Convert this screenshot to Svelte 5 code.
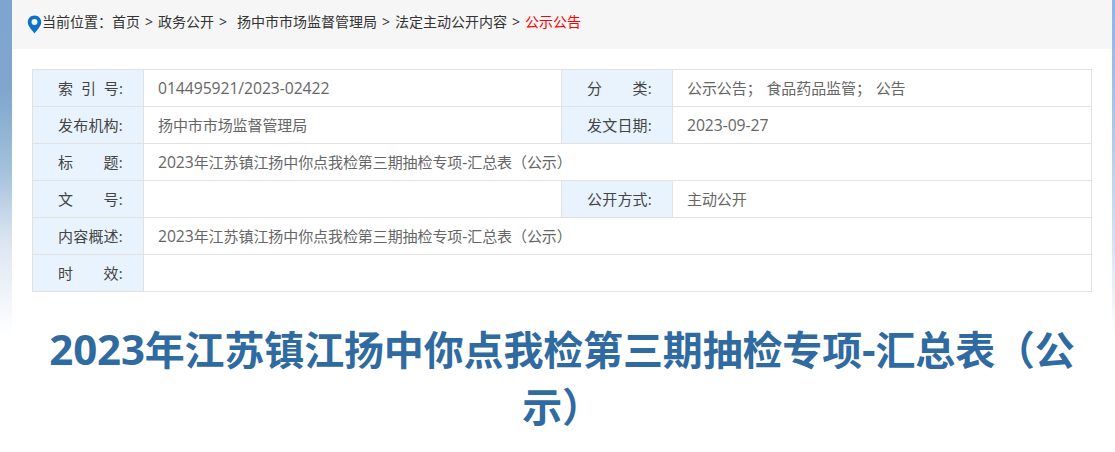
<script>
  const tail = '年江苏镇江扬中你点我检第三期抽检专项';
  const end = '汇总表（公示）';
</script>

{#snippet docTitle()}<span class="n">2023</span>{tail}<span class="n">-</span>{end}{/snippet}

<div class="page">
  <div class="wrap">
    <nav class="crumbs">
      <svg class="pin" width="15" height="19" viewBox="0 0 15 19" aria-hidden="true">
        <path fill-rule="evenodd" fill="#0a70c8" d="M7.5 0.5C3.6 0.5 0.8 3.4 0.8 7.1c0 4.4 4.6 8.6 6.7 11.4 2.1-2.8 6.7-7 6.7-11.4C14.2 3.4 11.4 0.5 7.5 0.5zM7.5 4.1a3 3 0 1 1 0 6 3 3 0 0 1 0-6z"/>
      </svg>
      <span>当前位置：</span><span>首页</span><span class="s">&gt;</span><span>政务公开</span><span class="s s2">&gt;</span><span>扬中市市场监督管理局</span><span class="s">&gt;</span><span>法定主动公开内容</span><span class="s">&gt;</span><span class="cur">公示公告</span>
    </nav>

    <table>
      <colgroup><col class="k" /><col class="v" /><col class="k" /><col /></colgroup>
      <tbody>
        <tr>
          <th>索&ensp;引&ensp;号:</th><td class="num"><span class="n">014495921/2023-02422</span></td>
          <th>分&emsp;&emsp;类:</th><td>公示公告； 食品药品监管； 公告</td>
        </tr>
        <tr>
          <th>发布机构:</th><td>扬中市市场监督管理局</td>
          <th>发文日期:</th><td class="num"><span class="n">2023-09-27</span></td>
        </tr>
        <tr>
          <th>标&emsp;&emsp;题:</th><td colspan="3">{@render docTitle()}</td>
        </tr>
        <tr>
          <th>文&emsp;&emsp;号:</th><td></td>
          <th>公开方式:</th><td>主动公开</td>
        </tr>
        <tr>
          <th>内容概述:</th><td colspan="3">{@render docTitle()}</td>
        </tr>
        <tr>
          <th>时&emsp;&emsp;效:</th><td colspan="3"></td>
        </tr>
      </tbody>
    </table>

    <h1>{@render docTitle()}</h1>
  </div>
</div>

<style>
  :global(body) {
    margin: 0;
    background: #fff;
  }
  .page {
    height: 452px;
    overflow: hidden;
    padding: 0 3px 0 12px;
    background-image:
      linear-gradient(180deg, #7ea5d0 0, #7fa6cd 90px, #a3c1da 170px, #dbe4f0 240px, #fff 335px),
      linear-gradient(180deg, #8db4e2 0, #a8c4e8 110px, #d5e1f2 240px, #fff 335px);
    background-size: 12px 100%, 3px 100%;
    background-position: left top, right top;
    background-repeat: no-repeat;
    font-family: "Open Sans", "Noto Sans CJK SC", sans-serif;
  }
  .wrap {
    background: #fff;
    height: 452px;
  }
  .crumbs {
    height: 49px;
    background: #f6f6f6;
    display: flex;
    align-items: center;
    padding-left: 15px;
    padding-bottom: 7px;
    box-sizing: border-box;
    font-size: 14px;
    color: #333;
    white-space: nowrap;
  }
  .pin {
    margin-top: 7px;
    flex: none;
  }
  .s {
    margin: 0 5px;
  }
  .s2 {
    margin-right: 10px;
  }
  .cur {
    color: #f00;
  }
  .n {
    font-size: 1.05em;
    line-height: 1;
  }
  table {
    width: 1060px;
    margin: 20px 0 0 20px;
    border-collapse: collapse;
    table-layout: fixed;
    font-size: 15px;
  }
  col.k {
    width: 111px;
  }
  col.v {
    width: 418px;
  }
  th,
  td {
    height: 37px;
    padding: 0 0 2px;
    box-sizing: border-box;
    border: 1px solid #e2e2e2;
    white-space: nowrap;
  }
  th {
    background: #e8f3fd;
    color: #444;
    font-weight: 400;
    text-align: left;
    padding-left: 25px;
    letter-spacing: 0.2px;
  }
  td {
    color: #666;
    padding-left: 14px;
    letter-spacing: -0.08px;
    word-spacing: 1px;
  }
  td.num {
    padding-bottom: 0;
  }
  h1 {
    margin: 29px 30px 0;
    color: #2f6aa0;
    font-size: 40px;
    letter-spacing: -0.15px;
    font-weight: 700;
    line-height: 57px;
    text-align: center;
  }
</style>
